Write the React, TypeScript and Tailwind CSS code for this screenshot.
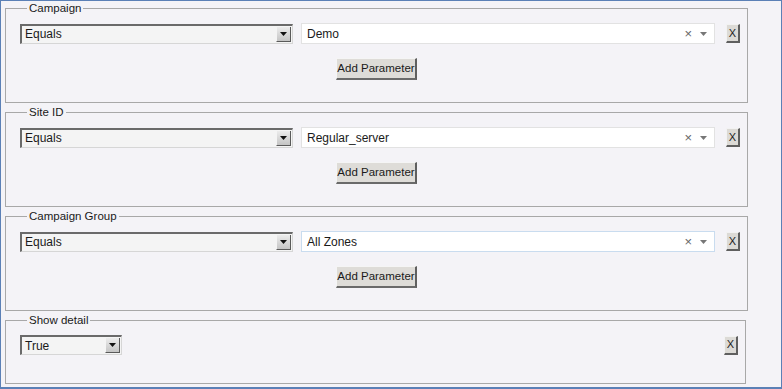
import React from "react";

const font = { fontFamily: '"Liberation Sans", Arial, sans-serif' };

function Select({ value, width }: { value: string; width: string }) {
  return (
    <div
      className={`${width} h-[20px] flex items-stretch border-t-2 border-l-2 border-t-[#6a6a6a] border-l-[#6a6a6a] border-b border-r border-b-[#d6d6d6] border-r-[#d6d6d6] bg-[#f4f4f4]`}
    >
      <div className="flex-1 flex items-center pl-[3px] text-[12px] text-[#1a1a1a]">{value}</div>
      <div className="w-[15px] my-[1px] mr-[1px] flex items-center justify-center bg-gradient-to-b from-[#ececec] to-[#c4c4c4] border-r border-b border-r-[#5a5a5a] border-b-[#5a5a5a] border-l border-l-[#f4f4f4]">
        <svg width="7" height="4" viewBox="0 0 7 4">
          <path d="M0 0h7L3.5 4z" fill="#111" />
        </svg>
      </div>
    </div>
  );
}

function Combo({ value, focus }: { value: string; focus?: boolean }) {
  return (
    <div
      className={`w-[414px] h-[21px] flex items-center bg-white border ${
        focus ? "border-[#c9dcef]" : "border-[#e2e2e2]"
      }`}
    >
      <div className="flex-1 pl-[5px] text-[12px] text-[#1a1a1a]">{value}</div>
      <div className="text-[13px] text-[#666] leading-none mr-[8px]">×</div>
      <svg width="7" height="4" viewBox="0 0 7 4" className="mr-[7px]">
        <path d="M0 0h7L3.5 4z" fill="#777" />
      </svg>
    </div>
  );
}

function XButton() {
  return (
    <div className="w-[14px] h-[19px] flex items-center justify-center bg-[#dcdad6] border-t border-l border-t-[#f2f2f2] border-l-[#f2f2f2] border-r-2 border-b-2 border-r-[#5f5f5f] border-b-[#5f5f5f] text-[11px] text-[#222] leading-none">
      X
    </div>
  );
}

function AddParam() {
  return (
    <div className="flex justify-center pr-[7px]">
      <div className="w-[81px] h-[22px] flex items-center justify-center whitespace-nowrap bg-[#dedcd8] border-t border-l border-t-[#f5f5f5] border-l-[#f5f5f5] border-r-2 border-b-2 border-r-[#5f5f5f] border-b-[#6a6a6a] text-[11.5px] text-[#1a1a1a]">
        Add Parameter
      </div>
    </div>
  );
}

function Group({
  label,
  value,
  focus,
}: {
  label: string;
  value: string;
  focus?: boolean;
}) {
  return (
    <fieldset className="w-[741px] h-[101px] border border-[#a8a8a8] pl-[14px] pr-[7px] pt-[8px]">
      <legend className="ml-[7px] px-[2px] text-[11.5px] leading-[13px] text-[#1a1a1a]">{label}</legend>
      <div className="flex items-center">
        <Select value="Equals" width="w-[273px]" />
        <div className="ml-[8px]">
          <Combo value={value} focus={focus} />
        </div>
        <div className="ml-[11px]">
          <XButton />
        </div>
      </div>
      <div className="mt-[14px]">
        <AddParam />
      </div>
    </fieldset>
  );
}

export default function App() {
  return (
    <div
      style={font}
      className="w-[782px] h-[389px] bg-[#f4f3f7] border border-[#5b80b6] border-b-2 pl-[4px] pt-[1px] flex flex-col gap-[3px]"
    >
      <Group label="Campaign" value="Demo" />
      <Group label="Site ID" value="Regular_server" />
      <Group label="Campaign Group" value="All Zones" focus />
      <fieldset className="w-[741px] h-[70px] border border-[#a8a8a8] pl-[14px] pr-[7px] pt-[8px]">
        <legend className="ml-[7px] px-[2px] text-[11.5px] leading-[13px] text-[#1a1a1a]">Show detail</legend>
        <div className="flex items-center justify-between">
          <Select value="True" width="w-[102px]" />
          <XButton />
        </div>
      </fieldset>
    </div>
  );
}
